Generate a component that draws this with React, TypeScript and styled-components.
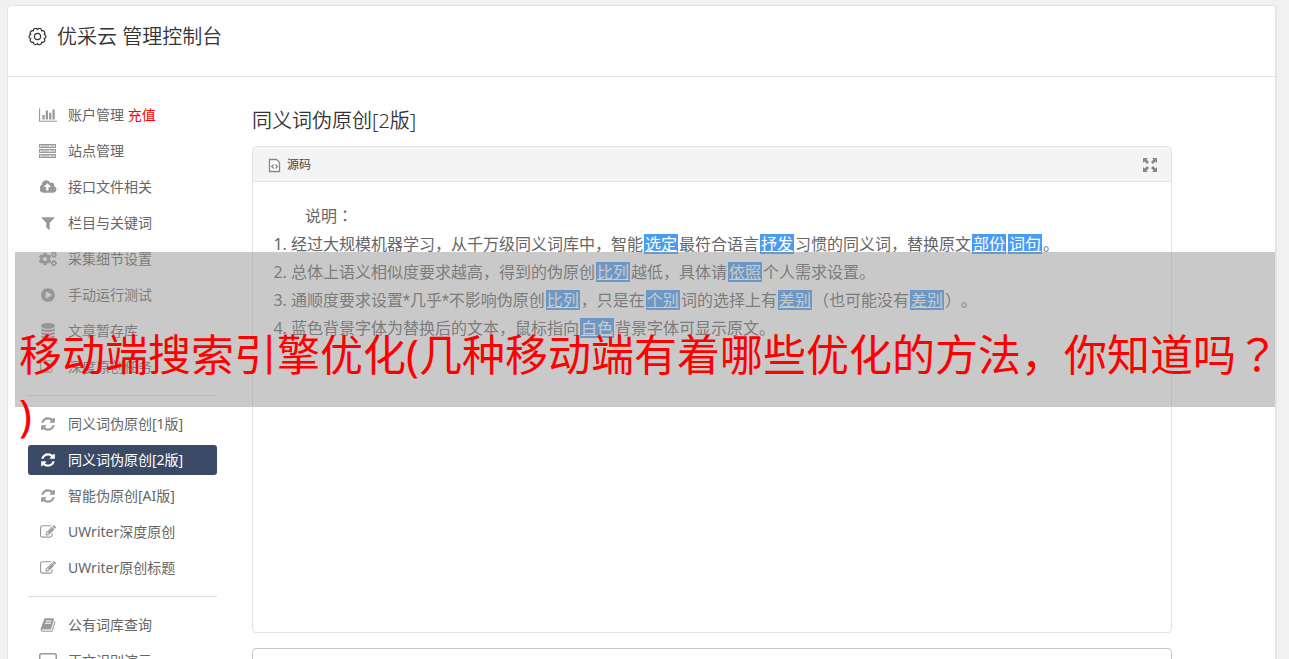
import React from "react";
import styled, { createGlobalStyle, css } from "styled-components";
import { FaCogs } from "react-icons/fa";

const GlobalStyle = createGlobalStyle`
  * { box-sizing: border-box; }
  html { scrollbar-width: none; }
  body {
    margin: 0;
    background: #f1f1f1;
    color: #666;
    font-family: "Noto Sans", "Noto Sans CJK SC", sans-serif;
    font-size: 14px;
    line-height: 20px;
    text-spacing-trim: space-all;
  }
`;

const Page = styled.div`
  position: relative;
  padding: 5px 12px 0 7px;
`;

const Panel = styled.div`
  background: #fefefe;
  border: 1px solid #e4e4e4;
  border-right-width: 2px;
  border-bottom: 0;
  border-radius: 4px 4px 0 0;
`;

const Header = styled.header`
  display: flex;
  align-items: center;
  gap: 10px;
  height: 71px;
  padding: 0 20px 8px;
  border-bottom: 1px solid #e4e4e4;
  color: #333;
`;

const Brand = styled.h1`
  margin: 0;
  font-size: 20px;
  line-height: 28px;
  font-weight: 350;
`;

const Columns = styled.div`
  display: flex;
  align-items: flex-start;
  gap: 35px;
  padding: 23px 20px 0;
`;

const Sidebar = styled.nav`
  flex: 0 0 189px;
`;

const Menu = styled.ul`
  margin: 0;
  padding: 0;
  list-style: none;
  display: flex;
  flex-direction: column;
  gap: 6px;
`;

const Divider = styled.hr`
  margin: 13px 0;
  border: 0;
  border-top: 1px solid #ddd;
`;

const MenuLink = styled.a<{ $active?: boolean }>`
  display: flex;
  align-items: center;
  gap: 10px;
  height: 30px;
  padding: 0 10px;
  border-radius: 3px;
  color: #666;
  text-decoration: none;
  white-space: nowrap;
  svg { color: #999; }
  ${(p) =>
    p.$active &&
    css`
      background: #3a4a66;
      color: #fff;
      svg { color: #fff; }
    `}
`;

const IconSlot = styled.span`
  display: flex;
  justify-content: center;
  align-items: center;
  width: 20px;
`;

const Highlight = styled.span`
  color: #f00;
`;

const Main = styled.main`
  flex: 1;
  min-width: 0;
  max-width: 920px;
`;

const Title = styled.h2`
  margin: 7px 0 11px;
  color: #333;
  font-size: 20px;
  line-height: 28px;
  font-weight: 350;
`;

const Editor = styled.section`
  border: 1px solid #e4e4e4;
  border-radius: 4px;
`;

const Toolbar = styled.div`
  display: flex;
  justify-content: space-between;
  align-items: center;
  height: 35px;
  padding: 2px 14px 0 15px;
  background: #f4f4f4;
  border-bottom: 1px solid #e4e4e4;
  border-radius: 3px 3px 0 0;
`;

const ToolButton = styled.button`
  display: flex;
  align-items: center;
  gap: 6px;
  padding: 0;
  border: 0;
  background: none;
  color: #444;
  font: inherit;
  font-size: 12px;
  svg { color: #888; }
`;

const Article = styled.article`
  min-height: 450px;
  padding: 20px;
  font-size: 16px;
  line-height: 28px;
  p { margin: 0; text-indent: 2em; }
  ol { margin: 0; padding-left: 18px; }
`;

const Word = styled.u`
  display: inline-block;
  margin: 0 1px;
  padding: 0 1px;
  background: #4a9cf3;
  color: #fff;
  line-height: 20px;
`;

const CenteredMark = styled.span`
  font-family: "Noto Sans CJK TC", sans-serif;
  line-height: 1;
`;

const Asterisk = styled.span`
  font-family: Roboto, sans-serif;
  line-height: 1;
`;

const Output = styled.textarea`
  display: block;
  width: 100%;
  height: 120px;
  margin-top: 15px;
  padding: 10px;
  border: 1px solid #c8c8c8;
  border-radius: 4px;
  background: #fff;
  resize: none;
`;

const Banner = styled.div`
  position: absolute;
  top: 252px;
  left: 15px;
  right: 14px;
  height: 155px;
  padding: 73px 0 0 4px;
  background: rgba(147, 147, 147, 0.49);
  color: #f00;
  font-size: 43px;
  line-height: 60px;
  white-space: nowrap;
  pointer-events: none;
`;

/* Sets colons and question marks in the middle of their cell. */
const Prose = ({ children }: { children: string }) => (
  <>
    {children.split(/([：？*])/).map((part, i) => {
      if (part === "*") return <Asterisk key={i}>*</Asterisk>;
      return i % 2 ? <CenteredMark key={i} lang="zh-TW">{part}</CenteredMark> : part;
    })}
  </>
);

type GlyphProps = { d: string; w?: number; size?: number };
const Glyph = ({ d, w = 1792, size = 16 }: GlyphProps) => (
  <svg width={Math.round((size * w) / 1792)} height={size} viewBox={`0 0 ${w} 1792`} fill="currentColor" aria-hidden="true">
    <path d={d} />
  </svg>
);

const chart = "M640 896v512h-256v-512h256zm384-512v1024h-256v-1024h256zm1024 1152v128h-2048v-1536h128v1408h1920zm-640-896v768h-256v-768h256zm384-384v1152h-256v-1152h256z";
const cloud = "M1216 864q0-14-9-23l-352-352q-9-9-23-9t-23 9l-351 351q-10 12-10 24 0 14 9 23t23 9h224v352q0 13 9.5 22.5t22.5 9.5h192q13 0 22.5-9.5t9.5-22.5v-352h224q13 0 22.5-9.5t9.5-22.5zm640 288q0 159-112.5 271.5t-271.5 112.5h-1088q-185 0-316.5-131.5t-131.5-316.5q0-130 70-240t188-165q-2-30-2-43 0-212 150-362t362-150q156 0 285.5 87t188.5 231q71-62 166-62 106 0 181 75t75 181q0 76-41 138 130 31 213.5 135.5t83.5 238.5z";
const filter = "M1595 295q17 41-14 70l-493 493v742q0 42-39 59-13 5-25 5-27 0-45-19l-256-256q-19-19-19-45v-486l-493-493q-31-29-14-70 17-39 59-39h1280q42 0 59 39z";
const play = "M896 128q209 0 385.5 103t279.5 279.5 103 385.5-103 385.5-279.5 279.5-385.5 103-385.5-103-279.5-279.5-103-385.5 103-385.5 279.5-279.5 385.5-103zm384 823q32-18 32-55t-32-55l-544-320q-31-19-64-1-32 19-32 56v640q0 37 32 56 16 8 32 8 17 0 32-9z";
const database = "M896 768q237 0 443-43t325-127v170q0 69-103 128t-280 93.5-385 34.5-385-34.5-280-93.5-103-128v-170q119 84 325 127t443 43zm0 768q237 0 443-43t325-127v170q0 69-103 128t-280 93.5-385 34.5-385-34.5-280-93.5-103-128v-170q119 84 325 127t443 43zm0-384q237 0 443-43t325-127v170q0 69-103 128t-280 93.5-385 34.5-385-34.5-280-93.5-103-128v-170q119 84 325 127t443 43zm0-1152q208 0 385 34.5t280 93.5 103 128v128q0 69-103 128t-280 93.5-385 34.5-385-34.5-280-93.5-103-128v-128q0-69 103-128t280-93.5 385-34.5z";
const edit = "M888 1184l116-116-152-152-116 116v56h96v96h56zm440-720q-16-16-33 1l-350 350q-17 17-1 33t33-1l350-350q17-17 1-33zm80 594v190q0 119-84.5 203.5t-203.5 84.5h-832q-119 0-203.5-84.5t-84.5-203.5v-832q0-119 84.5-203.5t203.5-84.5h832q63 0 117 25 15 7 18 23 3 17-9 29l-49 49q-14 14-32 8-23-6-45-6h-832q-66 0-113 47t-47 113v832q0 66 47 113t113 47h832q66 0 113-47t47-113v-126q0-13 9-22l64-64q15-15 35-7t20 29zm-96-738l288 288-672 672h-288v-288zm444 132l-92 92-288-288 92-92q28-28 68-28t68 28l152 152q28 28 28 68t-28 68z";
const refresh = "M1639 1056q0 5-1 7-64 268-268 434.5t-478 166.5q-146 0-282.5-55t-243.5-157l-129 129q-19 19-45 19t-45-19-19-45v-448q0-26 19-45t45-19h448q26 0 45 19t19 45-19 45l-137 137q71 66 161 102t187 36q134 0 250-65t186-179q11-17 53-117 8-23 30-23h192q13 0 22.5 9.5t9.5 22.5zm25-800v448q0 26-19 45t-45 19h-448q-26 0-45-19t-19-45 19-45l138-138q-148-137-349-137-134 0-250 65t-186 179q-11 17-53 117-8 23-30 23h-199q-13 0-22.5-9.5t-9.5-22.5v-7q65-268 270-434.5t480-166.5q146 0 284 55.5t245 156.5l130-129q19-19 45-19t45 19 19 45z";
const book = "M1703 478q40 57 18 129l-275 906q-19 64-76.5 107.5t-122.5 43.5h-923q-77 0-148.5-53.5t-99.5-131.5q-24-67-2-127 0-4 3-27t4-37q1-8-3-21.5t-3-19.5q2-11 8-21t16.5-23.5 16.5-23.5q23-38 45-91.5t30-91.5q3-10 .5-30t-.5-28q3-11 17-28t17-23q21-36 42-92t25-90q1-9-2.5-32t.5-28q4-13 22-30.5t22-22.5q19-26 42.5-84.5t27.5-96.5q1-8-3-25.5t-2-26.5q2-8 9-18t18-23 17-21q8-12 16.5-30.5t15-35 16-36 19.5-32 26.5-23.5 36-11.5 47.5 5.5l-1 3q38-9 51-9h761q74 0 114 56t18 130l-274 906q-36 119-71.5 153.5t-128.5 34.5h-869q-27 0-38 15-11 16-1 43 24 70 144 70h923q29 0 56-15.5t35-41.5l300-987q7-22 5-57 38 15 59 43zm-1064 2q-4 13 2 22.5t20 9.5h608q13 0 25.5-9.5t16.5-22.5l21-64q4-13-2-22.5t-20-9.5h-608q-13 0-25.5 9.5t-16.5 22.5zm-83 256q-4 13 2 22.5t20 9.5h608q13 0 25.5-9.5t16.5-22.5l21-64q4-13-2-22.5t-20-9.5h-608q-13 0-25.5 9.5t-16.5 22.5z";

/* Ten rounded lobes around the hub, the first one pointing up. */
const gearOutline = (() => {
  const point = (k: number) => {
    const a = ((k * 36 - 108) * Math.PI) / 180;
    return `${(9.5 + 7 * Math.cos(a)).toFixed(2)} ${(8.5 + 7 * Math.sin(a)).toFixed(2)}`;
  };
  let d = `M${point(0)}`;
  for (let k = 1; k <= 10; k += 1) d += `A2.2 2.2 0 0 1 ${point(k)}`;
  return `${d}Z`;
})();

const GearIcon = () => (
  <svg width="19" height="19" viewBox="0 0 19 19" fill="none" stroke="currentColor" strokeWidth="1.200" aria-hidden="true">
    <path d={gearOutline} strokeLinejoin="round" transform="rotate(18 9.500 8.500)" />
    <circle cx="9.500" cy="8.500" r="3.100" />
  </svg>
);

const ServerIcon = () => (
  <svg width="18" height="14" viewBox="0 0 18 14" aria-hidden="true">
    {[0, 5, 10].map((y) => (
      <g key={y}>
        <rect x="0.500" y={y + 0.5} width="16" height="3" fill="#ddd" stroke="currentColor" />
        <path d={`M2 ${y + 2}h8M12 ${y + 2}h3`} stroke="currentColor" strokeOpacity="0.700" />
      </g>
    ))}
  </svg>
);

const MonitorIcon = () => (
  <svg width="18" height="16" viewBox="0 0 18 16" fill="none" stroke="currentColor" strokeWidth="1.500" aria-hidden="true">
    <rect x="0.750" y="0.750" width="16.500" height="11" rx="1.500" />
    <path d="M5 15h8M9 12v3" />
  </svg>
);

const SourceIcon = () => (
  <svg width="13" height="16" viewBox="0 0 13 16" fill="none" stroke="currentColor" aria-hidden="true">
    <path d="M1.500 2.500h7l3 3v9h-10z" fill="#fff" strokeWidth="1.300" />
    <path d="M5.700 7.500L3.700 9.500l2 2M7.500 7.500l2 2-2 2" strokeWidth="1.300" />
  </svg>
);

const ExpandIcon = () => (
  <svg width="14" height="14" viewBox="0 0 14 14" fill="currentColor" aria-hidden="true">
    {[0, 90, 180, 270].map((a) => (
      <path key={a} transform={`rotate(${a} 7 7)`} d="M0 0h5L3.500 1.500 6 4 4 6 1.500 3.500 0 5z" />
    ))}
  </svg>
);

type Item = { icon: React.ReactNode; label: string; extra?: string; active?: boolean };

const groups: Item[][] = [
  [
    { icon: <Glyph d={chart} w={2048} />, label: "账户管理", extra: "充值" },
    { icon: <ServerIcon />, label: "站点管理" },
    { icon: <Glyph d={cloud} w={1920} />, label: "接口文件相关" },
    { icon: <Glyph d={filter} />, label: "栏目与关键词" },
    { icon: <FaCogs size={18} />, label: "采集细节设置" },
    { icon: <Glyph d={play} />, label: "手动运行测试" },
    { icon: <Glyph d={database} />, label: "文章暂存库" },
    { icon: <Glyph d={edit} />, label: "深度原创任务" },
  ],
  [
    { icon: <Glyph d={refresh} />, label: "同义词伪原创[1版]" },
    { icon: <Glyph d={refresh} />, label: "同义词伪原创[2版]", active: true },
    { icon: <Glyph d={refresh} />, label: "智能伪原创[AI版]" },
    { icon: <Glyph d={edit} />, label: "UWriter深度原创" },
    { icon: <Glyph d={edit} />, label: "UWriter原创标题" },
  ],
  [
    { icon: <Glyph d={book} />, label: "公有词库查询" },
    { icon: <MonitorIcon />, label: "正文识别演示" },
  ],
];

export default function App() {
  return (
    <Page>
      <GlobalStyle />
      <Panel>
        <Header>
          <GearIcon />
          <Brand>优采云 管理控制台</Brand>
        </Header>
        <Columns>
          <Sidebar>
            {groups.map((items, i) => (
              <React.Fragment key={i}>
                {i > 0 && <Divider />}
                <Menu>
                  {items.map((item) => (
                    <li key={item.label}>
                      <MenuLink href="#" $active={item.active}>
                        <IconSlot>{item.icon}</IconSlot>
                        <span>
                          {item.label}
                          {item.extra && <> <Highlight>{item.extra}</Highlight></>}
                        </span>
                      </MenuLink>
                    </li>
                  ))}
                </Menu>
              </React.Fragment>
            ))}
          </Sidebar>
          <Main>
            <Title>同义词伪原创[2版]</Title>
            <Editor>
              <Toolbar>
                <ToolButton type="button"><SourceIcon />源码</ToolButton>
                <ToolButton type="button" aria-label="全屏"><ExpandIcon /></ToolButton>
              </Toolbar>
              <Article>
                <p><Prose>说明：</Prose></p>
                <ol>
                  <li>经过大规模机器学习，从千万级同义词库中，智能<Word>选定</Word>最符合语言<Word>抒发</Word>习惯的同义词，替换原文<Word>部份</Word><Word>词句</Word>。</li>
                  <li>总体上语义相似度要求越高，得到的伪原创<Word>比列</Word>越低，具体请<Word>依照</Word>个人需求设置。</li>
                  <li><Prose>通顺度要求设置*几乎*不影响伪原创</Prose><Word>比列</Word>，只是在<Word>个别</Word>词的选择上有<Word>差别</Word>（也可能没有<Word>差别</Word>）。</li>
                  <li>蓝色背景字体为替换后的文本，鼠标指向<Word>白色</Word>背景字体可显示原文。</li>
                </ol>
              </Article>
            </Editor>
            <Output aria-label="输出" />
          </Main>
        </Columns>
      </Panel>
      <Banner>
        <Prose>移动端搜索引擎优化(几种移动端有着哪些优化的方法，你知道吗？</Prose>
        <br />)
      </Banner>
    </Page>
  );
}
